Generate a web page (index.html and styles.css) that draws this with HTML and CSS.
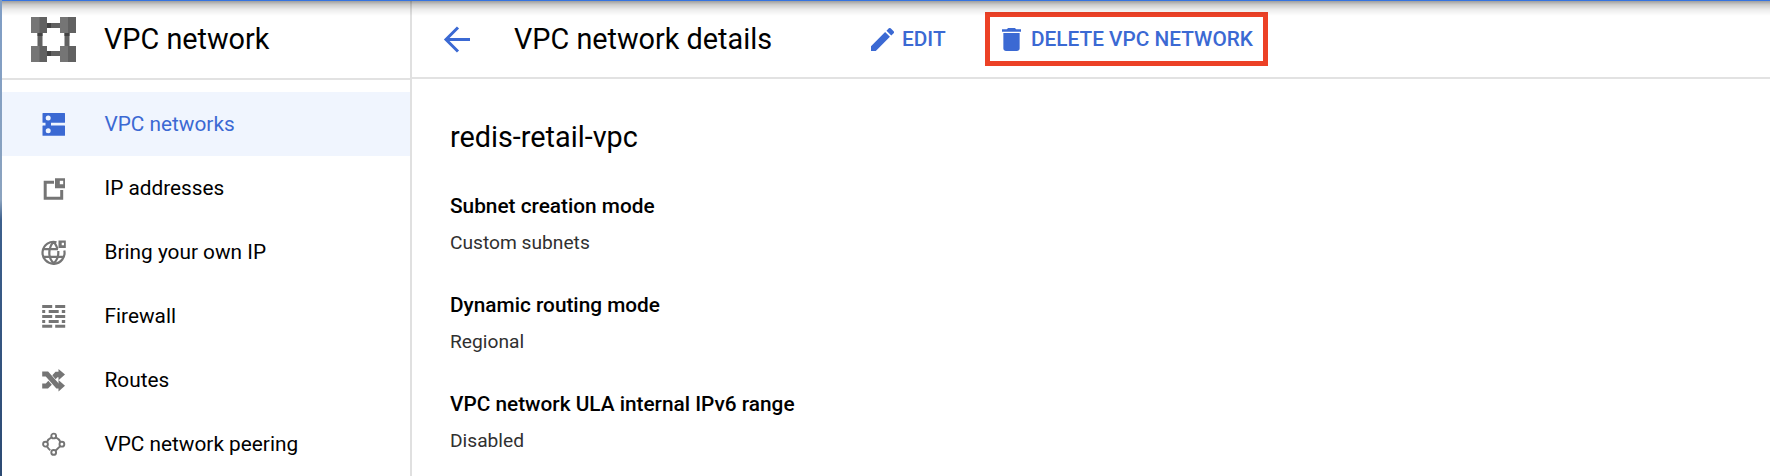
FILE: index.html
```html
<!DOCTYPE html>
<html lang="en">
<head>
<meta charset="utf-8">
<title>VPC network details</title>
<link rel="stylesheet" href="styles.css">
</head>
<body>
<div class="app">
  <aside class="sidebar">
    <header class="product">
      <svg class="product-logo" width="45" height="45" viewBox="0 0 45 45">
        <path fill="#616161" d="M16 6h13v5H16zM16 34h13v5H16zM6.500 16h5v13h-5zM33.500 16h5v13h-5z"/>
        <path fill="#424242" d="M16 6h4v5h-4zM16 34h4v5h-4zM6.500 16h5v3h-5zM33.500 16h5v3h-5z"/>
        <path fill="#757575" d="M0 0h16v16H0zM29 0h16v16H29zM0 29h16v16H0zM29 29h16v16H29z"/>
        <path fill="#616161" d="M8.500 0H16v16H8.500zM37 0h8v16h-8zM8.500 29H16v16H8.500zM37 29h8v16h-8z"/>
      </svg>
      <span class="product-name">VPC network</span>
    </header>
    <nav class="nav">
      <a class="nav-item nav-item-active">
        <svg class="nav-icon" viewBox="0 -.5 24 24"><path fill="currentColor" fill-rule="evenodd" d="M1 .5h21.500a.5.5 0 0 1 .5.5v8.800a.5.5 0 0 1-.5.500H9v2.700h13.500a.5.5 0 0 1 .5.500v9.300a.5.5 0 0 1-.5.500H1a.5.5 0 0 1-.5-.5v-9.300a.5.5 0 0 1 .5-.5H3.500v-2.700H1a.5.5 0 0 1-.5-.5V1a.5.5 0 0 1 .5-.5zM6.200 2.900a2.500 2.500 0 1 0 0 5a2.500 2.500 0 0 0 0-5zM6.200 15.700a2.500 2.500 0 1 0 0 5a2.500 2.500 0 0 0 0-5z"/></svg>
        <span class="nav-label">VPC networks</span>
      </a>
      <a class="nav-item">
        <svg class="nav-icon" viewBox="0 0 24 24"><path fill="none" stroke="currentColor" stroke-width="3" d="M12 6.300H3.200V22.200H19.700V14"/><path fill="currentColor" fill-rule="evenodd" d="M13 2.200h10v10H13zM17.800 4.800v3.400h3.400V4.800z"/></svg>
        <span class="nav-label">IP addresses</span>
      </a>
      <a class="nav-item">
        <svg class="nav-icon" viewBox="0 -.5 24 24"><g fill="none" stroke="currentColor" stroke-width="2.200"><path d="M14.500 1.700A11 11 0 1 0 22.300 10"/><path d="M11.700 1.200C8.500 4.500 7.300 8 7.300 12.500c0 4 1.500 7.500 4.400 10.300c2.900-2.800 4.600-6.300 4.600-10.300V10.500M11.700 1.200C13.700 4 15 6 15.300 8.500M1.500 8.700H16M1.500 16.300H21.500"/></g><path fill="currentColor" fill-rule="evenodd" d="M16.500 0H23.800v7.500h-7.300zM19.700 2.200v2.500h2.300V2.200z"/></svg>
        <span class="nav-label">Bring your own IP</span>
      </a>
      <a class="nav-item">
        <svg class="nav-icon" viewBox="0 -.3 24 24"><path fill="currentColor" d="M.2 .7h10v3h-10zM13.200 .7h10v3h-10zM.2 5.700h3v3h-3zM6.700 5.700h10v3h-10zM19.800 5.700h3.400v3h-3.400zM.2 10.700h10v3h-10zM13.200 10.700h10v3h-10zM.2 15.700h3v3h-3zM6.700 15.700h10v3h-10zM19.800 15.700h3.400v3h-3.400zM.2 20.500h10v3h-10zM13.200 20.500h10v3h-10z"/></svg>
        <span class="nav-label">Firewall</span>
      </a>
      <a class="nav-item">
        <svg class="nav-icon" viewBox="0 -.5 24 24"><path fill="none" stroke="currentColor" stroke-width="5" d="M.2 5.500H5L15.500 17.500H18"/><path fill="currentColor" d="M16.500 .5L23 6L16.500 11.700V8.700H15.500L13.500 10.700L10.300 6.700L13.500 3.200H16.500zM16.500 11.500L23 17.300L16.500 23V20zM.2 15H3.800L6.300 12.300L9.800 16.300L6 20H.2z"/></svg>
        <span class="nav-label">Routes</span>
      </a>
      <a class="nav-item">
        <svg class="nav-icon" viewBox="0 -.5 24 24"><g fill="none" stroke="currentColor" stroke-width="1.900"><circle cx="11.700" cy="3.500" r="2.400"/><circle cx="3.500" cy="11.700" r="2.400"/><circle cx="19.900" cy="11.700" r="2.400"/><circle cx="11.700" cy="19.900" r="2.400"/><path d="M9.600 4.800Q6.300 6.200 4.900 9.600M13.800 4.800Q17.100 6.200 18.500 9.600M4.900 13.700Q6.100 16.200 8.300 17.700M18.200 13.600L13.500 18.200"/></g></svg>
        <span class="nav-label">VPC network peering</span>
      </a>
    </nav>
  </aside>
  <main class="main">
    <header class="toolbar">
      <svg class="back" width="26" height="26" viewBox="0 0 26 26"><path fill="none" stroke="#3b69d3" stroke-width="3" d="M26 13.500H2.500M14 1.500L2 13.500L14 25.500"/></svg>
      <h1 class="page-title">VPC network details</h1>
      <a class="action action-edit">
        <svg width="23" height="23" viewBox="3 3 18 18"><path fill="currentColor" d="M3 17.250V21h3.750L17.810 9.940l-3.750-3.750L3 17.250zM20.710 7.040a1 1 0 0 0 0-1.410l-2.340-2.340a1 1 0 0 0-1.410 0l-1.830 1.830 3.750 3.750 1.830-1.830z"/></svg>
        <span class="action-label">EDIT</span>
      </a>
      <a class="action action-delete">
        <svg width="19" height="23" viewBox="5 3 14 18" preserveAspectRatio="none"><path fill="currentColor" d="M6 19c0 1.100.9 2 2 2h8c1.100 0 2-.9 2-2V7H6v12zM19 4h-3.500l-1-1h-5l-1 1H5v2h14V4z"/></svg>
        <span class="action-label">DELETE VPC NETWORK</span>
      </a>
    </header>
    <section class="details">
      <h2 class="network-name">redis-retail-vpc</h2>
      <dl class="props">
        <div class="prop"><dt class="prop-key">Subnet creation mode</dt><dd class="prop-value">Custom subnets</dd></div>
        <div class="prop"><dt class="prop-key">Dynamic routing mode</dt><dd class="prop-value">Regional</dd></div>
        <div class="prop"><dt class="prop-key">VPC network ULA internal IPv6 range</dt><dd class="prop-value">Disabled</dd></div>
      </dl>
    </section>
  </main>
  <div class="top-shadow"></div>
</div>
</body>
</html>
```
FILE: styles.css
```css
* { box-sizing: border-box; }
body {
  margin: 0;
  font-family: Roboto, "Liberation Sans", sans-serif;
  color: #000;
  background: linear-gradient(#7f9dc5 0, #8ba3bf 200px, #3d608d 220px, #2c4a73 476px);
}
.app {
  position: relative;
  display: flex;
  height: 476px;
  margin-left: 2px;
  overflow: hidden;
  background: #fff;
}
.top-shadow {
  position: absolute;
  inset: 0 0 auto 0;
  height: 16px;
  border-top: 1px solid #3573e0;
  background: linear-gradient(rgba(0,0,0,.38), rgba(0,0,0,.2) 25%, rgba(0,0,0,.07) 60%, rgba(0,0,0,0));
}
.sidebar {
  flex: none;
  width: 410px;
  border-right: 2px solid #e0e0e0;
}
.product {
  display: flex;
  align-items: center;
  height: 80px;
  padding-left: 29px;
  border-bottom: 2px solid #e2e2e2;
}
.product-logo { margin: 1px 28px 0 0; }
.product-name { font-size: 28.8px; line-height: 40px; }
.nav { padding-top: 12px; }
.nav-item {
  display: flex;
  align-items: center;
  gap: 38.500px;
  height: 64px;
  padding-left: 40px;
}
.nav-icon { width: 24px; height: 24px; color: #757575; overflow: visible; }
.nav-label { font-size: 20.8px; line-height: 28px; }
.nav-item-active { background: #f0f5fe; color: #3b69d3; }
.nav-item-active .nav-icon { color: #3b69d3; }
.main { flex: 1; }
.toolbar {
  display: flex;
  align-items: center;
  height: 79px;
  padding: 1px 0 0 32px;
  border-bottom: 2px solid #e2e2e2;
}
.back { margin-right: 44px; overflow: visible; }
.page-title {
  width: 357px;
  margin: 0;
  font-size: 28.8px;
  line-height: 40px;
  font-weight: 400;
}
.action {
  display: flex;
  align-items: center;
  color: #3b69d3;
  font-size: 20.8px;
  line-height: 28px;
  font-weight: 500;
}
.action-edit { gap: 8px; width: 114px; }
.action-delete {
  gap: 10px;
  width: 283px;
  height: 54px;
  padding-left: 12px;
  border: 5px solid #ec4126;
}
.action-label { white-space: nowrap; }
.details { padding: 38px 0 0 38px; }
.network-name {
  margin: 0;
  font-size: 28.8px;
  line-height: 40px;
  font-weight: 400;
}
.props { margin: 35px 0 0; }
.prop { height: 99px; }
.prop-key { font-size: 20.8px; line-height: 28px; font-weight: 500; }
.prop-value { margin: 9px 0 0; font-size: 19.2px; line-height: 27px; color: #303030; }
```
